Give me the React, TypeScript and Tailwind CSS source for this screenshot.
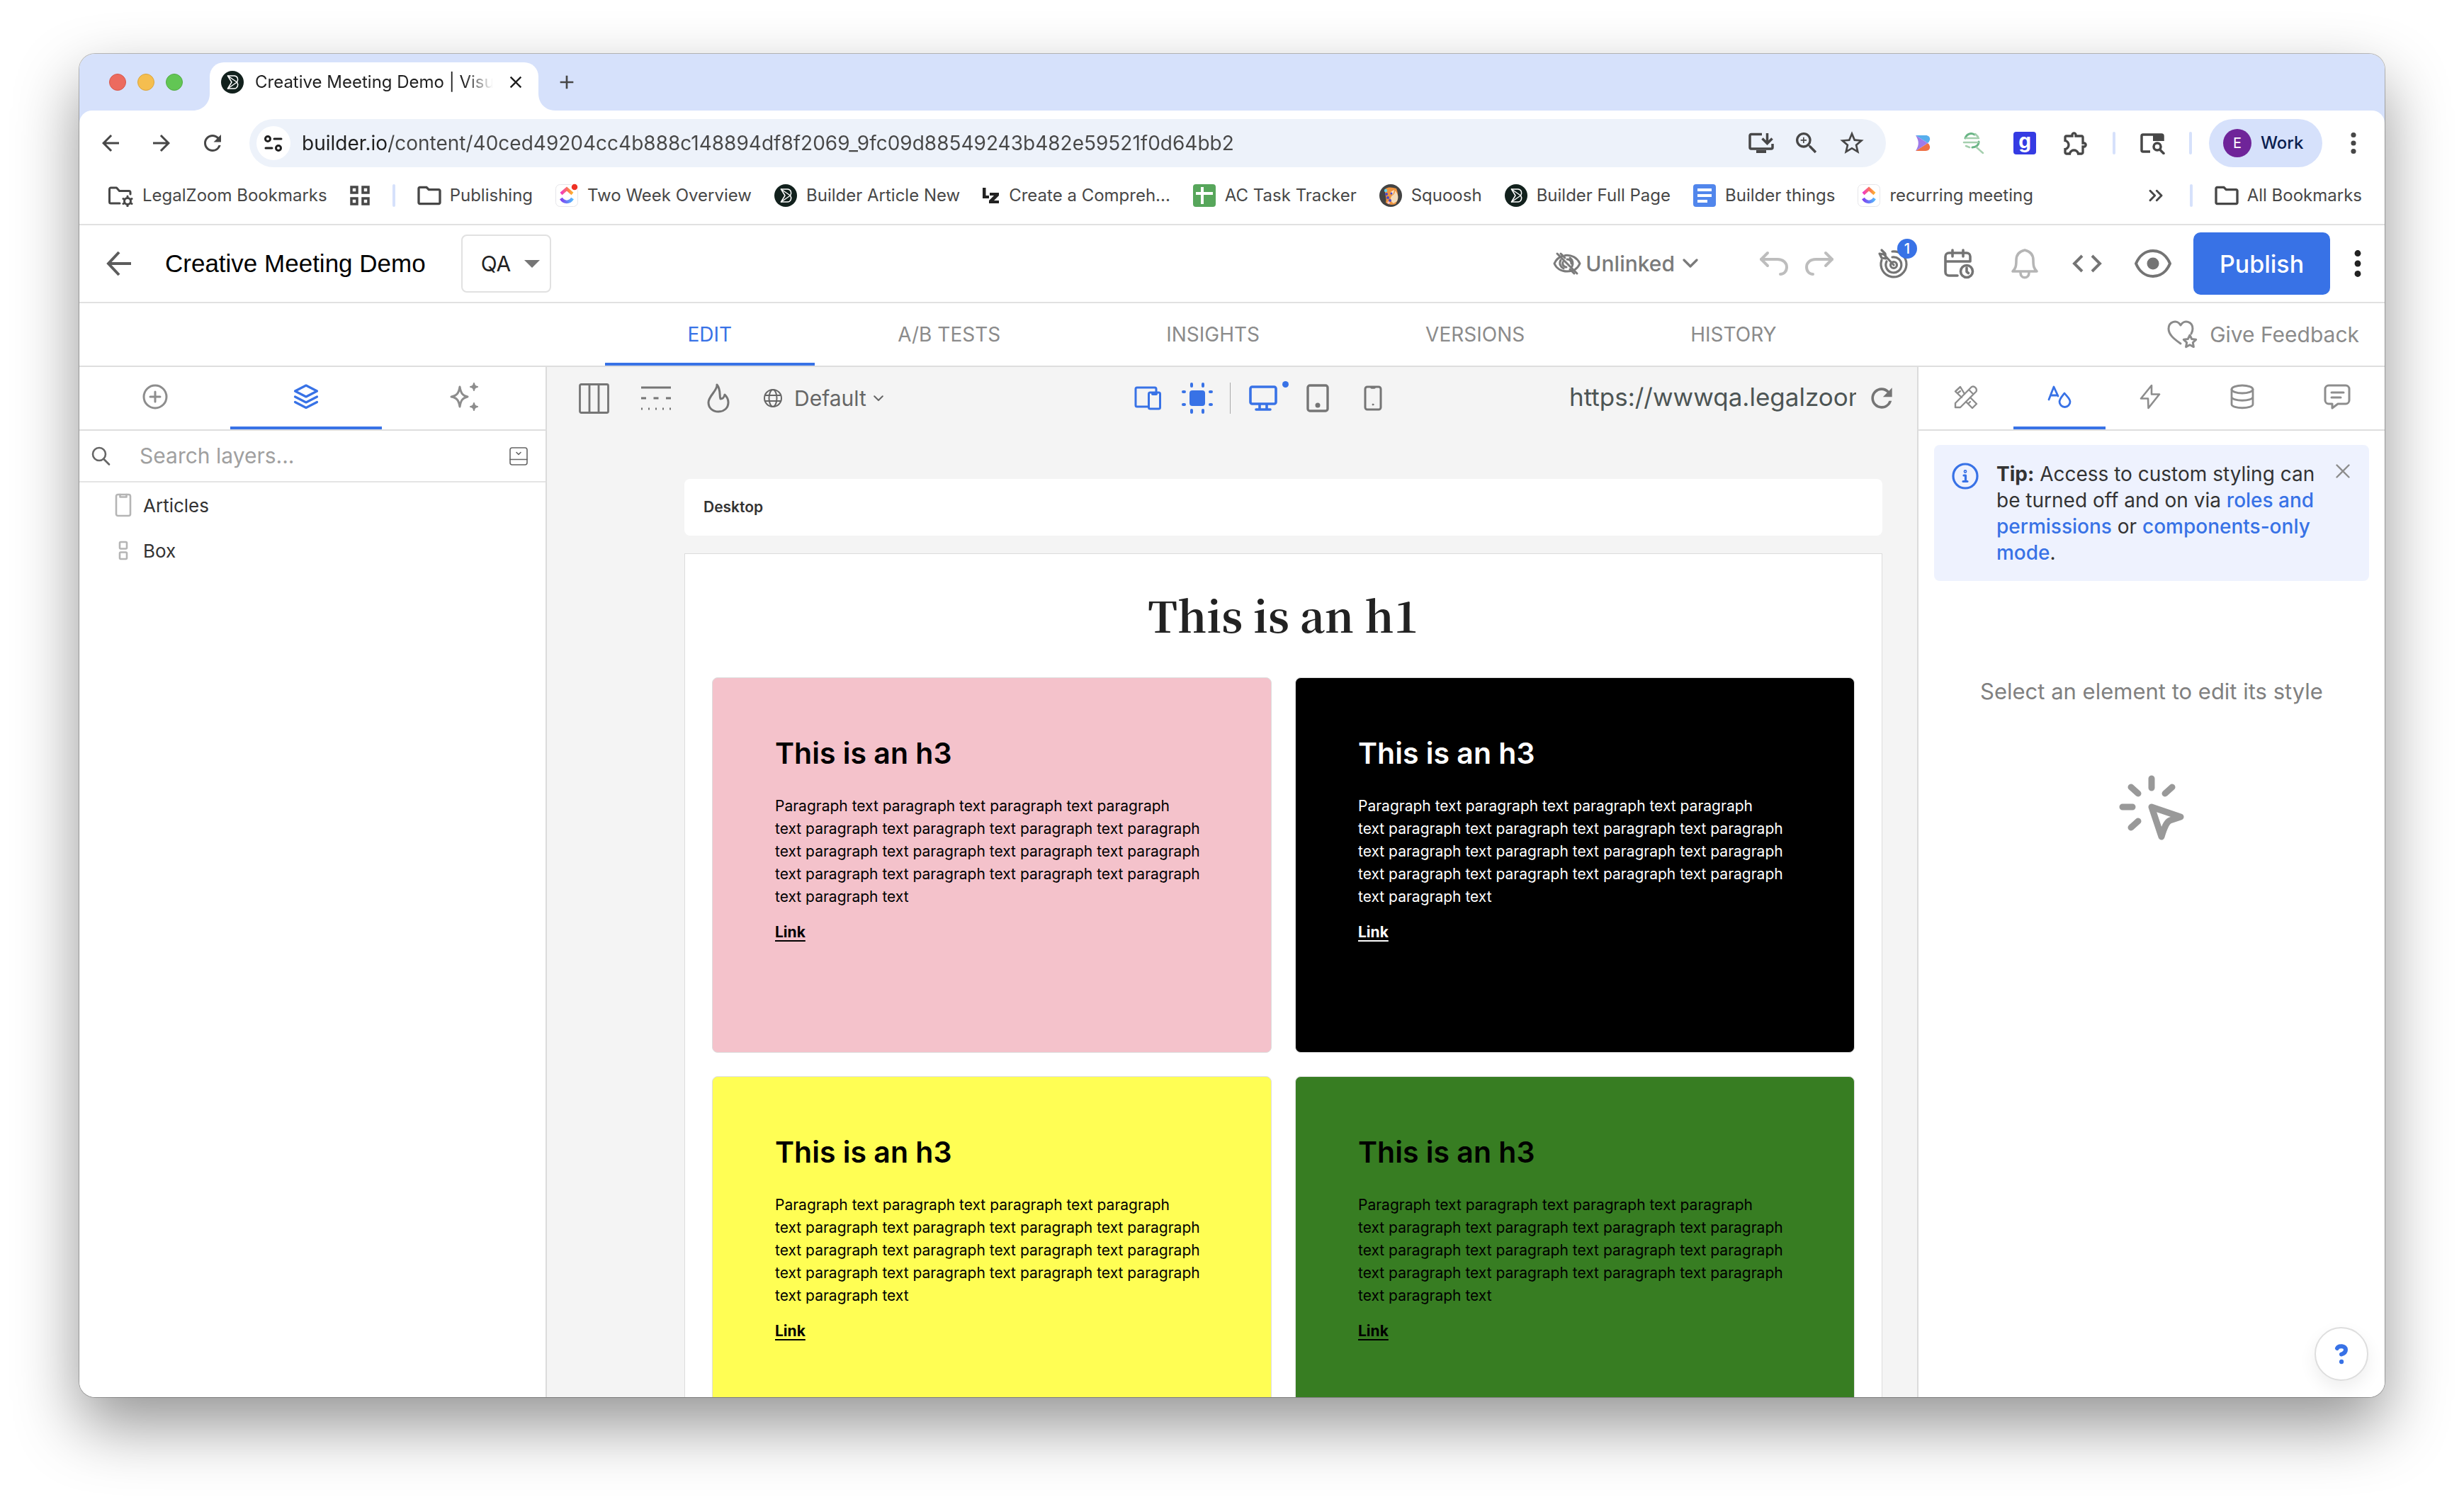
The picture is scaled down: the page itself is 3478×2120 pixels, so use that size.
import React from "react";
import type { ReactNode } from "react";
import {
  MdArrowBack,
  MdArrowForward,
  MdRefresh,
  MdOutlineFolder,
  MdZoomIn,
  MdStarOutline,
  MdOutlineExtension,
  MdClose,
  MdAdd,
} from "react-icons/md";
import { ChevronsRight } from "lucide-react";

type IconProps = { className?: string };

const Svg = ({
  box,
  className,
  width = 2,
  children,
}: {
  box: string;
  className?: string;
  width?: number;
  children: ReactNode;
}) => (
  <svg
    viewBox={box}
    className={className}
    fill="none"
    stroke="currentColor"
    strokeWidth={width}
    strokeLinecap="round"
    strokeLinejoin="round"
    aria-hidden="true"
  >
    {children}
  </svg>
);

const BuilderLogo = ({ className }: IconProps) => (
  <Svg box="0 0 32 32" className={className} width={1.5}>
    <circle cx="16" cy="16" r="16" fill="#12211d" stroke="none" />
    <g stroke="#fff">
      <path d="M9.500 7H18.500c5 0 6.500 5.500 4 9 2.500 3.500 1 9-4 9H9.500" fill="none" />
      <path d="M9.500 7l13 9-13 9 5.500-9z" />
    </g>
  </Svg>
);

const ClickUp = ({ dot = false, id }: { dot?: boolean; id: string }) => (
  <svg viewBox="0 0 32 32" className="size-8 shrink-0 overflow-visible" fill="none" aria-hidden="true">
    <defs>
      <linearGradient id={`${id}-a`} x1="6" x2="26" y1="0" y2="0" gradientUnits="userSpaceOnUse">
        <stop stopColor="#f02ae0" />
        <stop offset="0.6" stopColor="#fb7d4e" />
        <stop offset="1" stopColor="#fec42a" />
      </linearGradient>
      <linearGradient id={`${id}-b`} x1="6" x2="26" y1="0" y2="0" gradientUnits="userSpaceOnUse">
        <stop stopColor="#8432f0" />
        <stop offset="1" stopColor="#4fc4fd" />
      </linearGradient>
    </defs>
    <rect x="0.5" y="0.5" width="31" height="31" rx="6" fill="#fff" stroke="#e6e6ea" />
    <path d="M8 13.500l8-7 8 7" stroke={`url(#${id}-a)`} strokeWidth="4.500" />
    <path d="M8 20c4 6.500 12 6.500 16 0" stroke={`url(#${id}-b)`} strokeWidth="4.500" />
    {dot && <circle cx="27" cy="4" r="5" fill="#ee3124" stroke="#fff" strokeWidth="1.500" />}
  </svg>
);

const FolderGear = () => (
  <Svg box="0 0 36 32" className="h-8 w-9 shrink-0" width={3}>
    <path d="M17 27H4.500A2 2 0 0 1 2.500 25V7a2 2 0 0 1 2-2h8l4 4.500H30a2 2 0 0 1 2 2V14" />
    <circle cx="28" cy="24" r="4.500" />
    <path d="M28 17v1.500M28 29.500V31M22 20.500l1.500.8M32.500 26.700l1.500.8M22 27.500l1.500-.8M32.500 21.300l1.500-.8" />
  </Svg>
);

const Grid4 = () => (
  <Svg box="0 0 28 28" className="size-7" width={3.5}>
    <path strokeLinejoin="miter" d="M2 2h8v8H2zM18 2h8v8h-8zM2 18h8v8H2zM18 18h8v8h-8z" />
  </Svg>
);

const SheetIcon = () => (
  <svg viewBox="0 0 32 32" className="size-8 shrink-0" aria-hidden="true">
    <rect width="32" height="32" rx="4" fill="#57a65b" />
    <path d="M11 4h4v7h13v4H15v13h-4V15H4v-4h7z" fill="#fff" />
  </svg>
);

const DocIcon = () => (
  <svg viewBox="0 0 32 32" className="size-8 shrink-0" aria-hidden="true">
    <rect width="32" height="32" rx="4" fill="#5186ec" />
    <path d="M6 6h20v4H6zM6 14h20v4H6zM6 22h14v4H6z" fill="#fff" />
  </svg>
);

const LzIcon = () => (
  <svg viewBox="0 0 24 24" className="size-6 shrink-0" aria-hidden="true">
    <path d="M0 1h4.500v11H9v4H0z" fill="#222" />
    <path d="M10 8h13v4l-7 7h7v4H9v-4l7-7h-6z" fill="#222" />
  </svg>
);

const SquooshIcon = () => (
  <svg viewBox="0 0 32 32" className="size-8 shrink-0" aria-hidden="true">
    <circle cx="16" cy="16" r="16" fill="#434343" />
    <path d="M8 7c5-4 11-2 16-1 3 7 3 16-1 22-5 2-10 1-14-2 2-7-2-12-1-19z" fill="#ee9440" />
    <path d="M22 9c4 4 6 9 3 15l-5 3c-5-3-5-8-2-11 3-1 4-4 4-7z" fill="#f5dcb8" />
    <path d="M16 11l5-3-2 7z" fill="#fbe8cf" />
    <g fill="#4b49c9">
      <circle cx="10" cy="14" r="2" />
      <circle cx="12" cy="19" r="2" />
      <circle cx="15" cy="23" r="2" />
      <circle cx="17" cy="13" r="1.500" />
    </g>
    <circle cx="9" cy="9" r="2.200" fill="#62d3ee" />
    <circle cx="13" cy="26" r="1.800" fill="#f3c4ce" />
  </svg>
);

const InstallIcon = () => (
  <Svg box="0 0 40 32" className="h-8 w-10" width={3.5}>
    <path strokeLinecap="butt" d="M21 3.500H6a2 2 0 0 0-2 2V22a2 2 0 0 0 2 2h28a2 2 0 0 0 2-2v-5" />
    <path d="M13 26h14v4H13z" fill="currentColor" stroke="none" />
    <path strokeLinecap="butt" strokeLinejoin="miter" d="M28.500 2v13M21.500 9.500l7 7 7-7" />
  </Svg>
);

const TuneIcon = () => (
  <Svg box="0 0 28 28" className="size-7" width={3}>
    <circle cx="6" cy="8" r="3.500" />
    <path d="M15 8h10M3 21h9" />
    <circle cx="21" cy="21" r="3.500" />
  </Svg>
);

const RibbonLogo = () => (
  <svg viewBox="0 0 22 24" className="h-6 w-[22px]" aria-hidden="true">
    <path d="M1 1h14c7 0 8 7 3 11z" fill="#57aeed" />
    <path d="M1 23h14c7 0 8-7 3-11z" fill="#ef7045" />
    <path d="M1 1l17 11L1 23c5-8 5-14 0-22z" fill="#9f7be8" />
  </svg>
);

const SeoIcon = () => (
  <Svg box="0 0 32 32" className="size-8" width={3}>
    <g stroke="#69b585">
      <path d="M4 9C6 3 12 1 17 4" />
      <path d="M23 14c0 5-4 8-9 8" />
    </g>
    <g stroke="#a5cfae" strokeWidth="2.500">
      <path d="M5 9h18M2 15h20M20 22l9 8M18 3l4 4M5 20l5 2" />
    </g>
  </Svg>
);

const SearchPanelIcon = () => (
  <Svg box="0 0 36 32" className="h-8 w-9" width={3.5}>
    <path strokeLinecap="butt" d="M15 28H5a2 2 0 0 1-2-2V6a2 2 0 0 1 2-2h26a2 2 0 0 1 2 2v7" />
    <path d="M19 4h14v9H19z" fill="currentColor" stroke="none" />
    <circle cx="25" cy="21" r="5" />
    <path d="M29 25.500l5 5" />
  </Svg>
);

const UnlinkedIcon = () => (
  <Svg box="0 0 40 32" className="h-[34px] w-10" width={3}>
    <path d="M14 5C8 7 4 11 2 16c3 7 10 11 18 11 3 0 5-.4 7-1" />
    <path d="M17 4.500c9-1 17 3 21 11.500-1.500 3.500-4 6.500-7 8.500" />
    <path d="M11 11c-3 5 0 10 4 12M24 8c4 3 5 8 3 12" />
    <path d="M6 2l28 28M13 9l15 15M14 14c-1 3 1 7 5 7M20 10c4 0 6 3 6 6" />
    <path d="M11 2l6 6M24 24l6 6" />
  </Svg>
);

const UndoIcon = ({ className }: IconProps) => (
  <Svg box="0 0 42 36" className={className} width={4}>
    <path d="M12 3L3 12l9 9" />
    <path d="M3 12h23c8 0 13 5 13 11s-4 10-9 10" />
  </Svg>
);

const TargetIcon = () => (
  <Svg box="0 0 44 44" className="size-11" width={3.2}>
    <path d="M6 17a18 18 0 1 0 15-12" />
    <path d="M13 19a11 11 0 1 0 8-6" />
    <circle cx="23" cy="24" r="4.500" />
    <path d="M23 24L9 9M9 9L3 8l3 6 6 1-1-7-5-5" />
  </Svg>
);

const CalendarClock = () => (
  <Svg box="0 0 44 44" className="size-11" width={3.6}>
    <path d="M20 39H8a5 5 0 0 1-5-5V12a5 5 0 0 1 5-5h25a5 5 0 0 1 5 5v7H3M13 3v9M28 3v9" />
    <circle cx="33" cy="33" r="8.500" />
    <path d="M33 28v5.500l2.500 2" />
  </Svg>
);

const BellIcon = () => (
  <Svg box="0 0 44 44" className="size-11" width={3.6}>
    <path d="M5 33h34c-4-4-5-7-5-16 0-7-4-12-12-14-8 2-12 7-12 14 0 9-1 12-5 16z" />
    <path d="M16 35c0 9 12 9 12 0" />
  </Svg>
);

const CodeIcon = () => (
  <Svg box="0 0 44 28" className="h-7 w-11" width={4}>
    <path strokeLinecap="butt" strokeLinejoin="miter" d="M15 3L4 14l11 11M29 3l11 11-11 11" />
  </Svg>
);

const EyeIcon = () => (
  <Svg box="0 0 54 42" className="h-[42px] w-[54px]" width={4}>
    <path d="M3 21C8 9 17 3 27 3s19 6 24 18c-5 12-14 18-24 18S8 33 3 21z" />
    <circle cx="27" cy="21" r="8.500" fill="currentColor" stroke="none" />
  </Svg>
);

const HeartStar = () => (
  <Svg box="0 0 44 42" className="h-[42px] w-11" width={3}>
    <path d="M19 34C9 27 2 21 2 13 2 3 14-1 19 8c5-9 17-5 17 5 0 3-1 5-2 7" />
    <path d="M32 22l2.700 5.500 6 .8-4.400 4.200 1.100 6.100-5.400-2.900-5.400 2.900 1.100-6.100-4.400-4.200 6-.8z" />
  </Svg>
);

const PlusCircle = () => (
  <Svg box="0 0 36 36" className="size-9" width={3}>
    <circle cx="18" cy="18" r="16" />
    <path d="M18 11v14M11 18h14" />
  </Svg>
);

const LayersIcon = () => (
  <Svg box="0 0 36 36" className="size-9" width={3.2}>
    <path d="M18 2l15.500 8L18 18 2.500 10zM2.500 18L18 26l15.500-8M2.500 25.500l15.500 8 15.500-8" />
  </Svg>
);

const SparklesIcon = () => (
  <Svg box="0 0 42 40" className="h-10 w-[42px]" width={3}>
    <path d="M15 6c1.500 9 4 12.500 11 14-7 1.500-9.500 5-11 14-1.500-9-4-12.500-12-14 8-1.500 10.500-5 12-14z" />
    <path
      d="M35 1c.8 3.500 1.500 4.200 5 5-3.500.8-4.200 1.500-5 5-.8-3.500-1.500-4.200-5-5 3.500-.8 4.200-1.500 5-5zM35 29c.8 3.500 1.500 4.200 5 5-3.500.8-4.200 1.500-5 5-.8-3.500-1.500-4.200-5-5 3.500-.8 4.200-1.500 5-5z"
      fill="currentColor"
      strokeWidth="2"
    />
  </Svg>
);

const SearchIcon = () => (
  <Svg box="0 0 28 28" className="size-7 shrink-0" width={2.6}>
    <circle cx="12" cy="11" r="9" />
    <path d="M18.500 18l7.500 7.500" />
  </Svg>
);

const CollapseIcon = () => (
  <Svg box="0 0 26 26" className="size-[26px]" width={1.6}>
    <rect x="1" y="1" width="24" height="24" rx="3" />
    <path d="M1 17.500h24M10 7.500l3 3 3-3" />
  </Svg>
);

const PageIcon = () => (
  <Svg box="0 0 24 34" className="h-[34px] w-6" width={2.6}>
    <rect x="2" y="2" width="20" height="30" rx="2.500" />
    <path d="M7.500 2v3.500h9V2" />
  </Svg>
);

const StackIcon = () => (
  <Svg box="0 0 14 28" className="h-7 w-6" width={2.6}>
    <rect x="2" y="2" width="10" height="9.500" rx="1.500" />
    <rect x="2" y="16.500" width="10" height="9.500" rx="1.500" />
  </Svg>
);

const ColumnsIcon = () => (
  <Svg box="0 0 43 43" className="size-[43px]" width={2.8}>
    <rect x="1.500" y="1.500" width="40" height="40" rx="2" />
    <path d="M15 2v39M28 2v39" />
  </Svg>
);

const LinesIcon = () => (
  <Svg box="0 0 42 34" className="h-[34px] w-[42px]" width={2.8}>
    <path strokeLinecap="butt" d="M0 2h42" />
    <path strokeLinecap="butt" d="M0 17h42" strokeDasharray="7 10.500" />
    <path strokeLinecap="butt" d="M0 32h42" strokeDasharray="2 8" />
  </Svg>
);

const FlameIcon = () => (
  <Svg box="0 0 32 42" className="h-[42px] w-8" width={3}>
    <path d="M14 2c1 8-12 16-12 25 0 8 6 13 14 13s14-5 14-13c0-5-2-8-5-11-1 4-3 6-6 6-2-4 1-13-5-20z" />
  </Svg>
);

const GlobeIcon = () => (
  <Svg box="0 0 26 26" className="size-[26px]" width={2}>
    <circle cx="13" cy="13" r="12" />
    <ellipse cx="13" cy="13" rx="5.500" ry="12" />
    <path d="M2 9h22M2 17h22" />
  </Svg>
);

const Chevron = ({ className }: IconProps) => (
  <Svg box="0 0 24 14" className={className} width={3.2}>
    <path d="M3 2l9 9 9-9" />
  </Svg>
);

const DevicesIcon = () => (
  <Svg box="0 0 38 34" className="h-[34px] w-[38px]" width={3}>
    <path d="M19 29H4a2 2 0 0 1-2-2V4a2 2 0 0 1 2-2h25a2 2 0 0 1 2 2v5" />
    <rect x="20.500" y="9" width="16" height="23" rx="2" />
    <path d="M26 11h5" strokeWidth="4" />
  </Svg>
);

const SelectAreaIcon = () => (
  <Svg box="0 0 44 44" className="size-11" width={4}>
    <rect x="11" y="11" width="22" height="22" rx="4" fill="currentColor" stroke="none" />
    <path d="M14 2v3M30 2v3M14 39v3M30 39v3M2 13h2M40 13h2M2 31h2M40 31h2" />
  </Svg>
);

const MonitorIcon = () => (
  <Svg box="0 0 40 36" className="h-9 w-10" width={3.6}>
    <rect x="2" y="2" width="36" height="24" rx="2.500" />
    <path d="M15 27v6M25 27v6M10 34h20" />
  </Svg>
);

const TabletIcon = () => (
  <Svg box="0 0 32 40" className="h-10 w-8" width={3.4}>
    <rect x="2" y="2" width="28" height="36" rx="3" />
    <circle cx="16" cy="30" r="2.500" fill="currentColor" strokeWidth="2" />
  </Svg>
);

const PhoneIcon = () => (
  <Svg box="0 0 26 36" className="h-9 w-[26px]" width={3}>
    <rect x="2" y="2" width="22" height="32" rx="3" />
    <path d="M11 3h4" strokeWidth="3.500" />
    <circle cx="13" cy="27" r="1" fill="currentColor" strokeWidth="1" />
  </Svg>
);

const RulerPencil = () => (
  <Svg box="0 0 34 34" className="size-[34px]" width={2.4}>
    <path d="M2 32v-6L25 3a5 5 0 0 1 6.500 6.500L9 32zM21 7l6.500 6.500" />
    <path d="M15 13L9 3 2 9.500l9 8.500M5 12l4-3" />
    <path d="M23 18l9 9-6 6-9-9M20 27l3-3" />
  </Svg>
);

const StyleIcon = () => (
  <Svg box="0 0 34 32" className="h-8 w-[34px]" width={2.8}>
    <path d="M2 20L9 2l6 13M5 14h9" />
    <path d="M24 11c-4 5-7 8-7 12a7.500 7.500 0 0 0 15 0c0-4-4-7-8-12z" />
  </Svg>
);

const BoltIcon = () => (
  <Svg box="0 0 30 36" className="h-9 w-[30px]" width={2.6}>
    <path d="M17 2L2 20.500h10L12.500 34 28 14.500H17z" />
  </Svg>
);

const DatabaseIcon = () => (
  <Svg box="0 0 34 36" className="h-9 w-[34px]" width={2.8}>
    <ellipse cx="17" cy="7.500" rx="15" ry="5.500" />
    <path d="M2 7.500v21c0 7 30 7 30 0v-21M2 18c0 7 30 7 30 0" />
  </Svg>
);

const ChatIcon = () => (
  <Svg box="0 0 38 36" className="h-9 w-[38px]" width={3}>
    <path d="M7 2h24a5 5 0 0 1 5 5v16a5 5 0 0 1-5 5H20l-8 6v-6H7a5 5 0 0 1-5-5V7a5 5 0 0 1 5-5zM11 12h17M11 19h13" />
  </Svg>
);

const InfoIcon = () => (
  <Svg box="0 0 38 38" className="size-[38px] shrink-0" width={3.2}>
    <circle cx="19" cy="19" r="17" />
    <path d="M17 18h2.500v8M16 26.500h6" />
    <circle cx="19" cy="12.500" r="0.800" />
  </Svg>
);

const ClickIcon = () => (
  <Svg box="0 0 92 92" className="size-[92px]" width={9}>
    <path d="M46 5v13M5 45h14M17 17l10 9M75 17l-10 9M17 74l10-9" />
    <path d="M46 45l41 14-15 5c-4 2-7 6-12 23z" />
  </Svg>
);

const IconButton = ({
  label,
  className = "",
  children,
}: {
  label: string;
  className?: string;
  children: ReactNode;
}) => (
  <button aria-label={label} className={`flex shrink-0 items-center justify-center ${className}`}>
    {children}
  </button>
);

const Kebab = ({ className }: IconProps) => (
  <svg viewBox="0 0 12 36" className={className} fill="currentColor" aria-hidden="true">
    <circle cx="6" cy="5" r="4" />
    <circle cx="6" cy="18" r="4" />
    <circle cx="6" cy="31" r="4" />
  </svg>
);

const Bookmark = ({ icon, children }: { icon: ReactNode; children: ReactNode }) => (
  <a href="#" className="flex shrink-0 items-center gap-[13px] whitespace-nowrap">
    {icon}
    <span>{children}</span>
  </a>
);

const Divider = () => <span className="h-8 w-1 shrink-0 rounded-full bg-[#d6e1fb]" />;

function TabStrip() {
  return (
    <div className="flex h-20 shrink-0 items-end bg-[#d6e1fb]">
      <div className="ml-[42px] flex items-center gap-4 self-center">
        <span className="size-6 rounded-full border border-[#d8584c] bg-[#ec6b5f]" />
        <span className="size-6 rounded-full border border-[#dba53b] bg-[#f5be4f]" />
        <span className="size-6 rounded-full border border-[#52ab43] bg-[#62c654]" />
      </div>
      <div className="relative ml-[38px] flex h-[68px] w-[464px] items-center rounded-t-[20px] bg-white pb-3 pl-4">
        <svg viewBox="0 0 24 24" className="absolute bottom-0 -left-6 size-6" aria-hidden="true">
          <path d="M24 0v24H0C14 24 24 14 24 0z" fill="#fff" />
        </svg>
        <svg viewBox="0 0 24 24" className="absolute -right-6 bottom-0 size-6" aria-hidden="true">
          <path d="M0 0v24h24C10 24 0 14 0 0z" fill="#fff" />
        </svg>
        <BuilderLogo className="size-8 shrink-0" />
        <span className="ml-4 w-[336px] overflow-hidden text-2xl whitespace-nowrap text-[#1f1f1f] [mask-image:linear-gradient(90deg,#000_88%,transparent)]">
          Creative Meeting Demo | Visu
        </span>
        <IconButton label="Close tab" className="ml-[18px] text-[#1f1f1f]">
          <MdClose className="size-7" />
        </IconButton>
      </div>
      <IconButton label="New tab" className="ml-6 h-[80px] text-[#474747]">
        <MdAdd className="size-8" />
      </IconButton>
    </div>
  );
}

function Toolbar() {
  return (
    <div className="bg-[#d6e1fb]">
      <div className="flex items-center gap-8 rounded-t-[18px] bg-white px-6 pt-3 text-[#474747]">
        <IconButton label="Back" className="size-10">
          <MdArrowBack className="size-9" />
        </IconButton>
        <IconButton label="Forward" className="size-10">
          <MdArrowForward className="size-9" />
        </IconButton>
        <IconButton label="Reload" className="size-10">
          <MdRefresh className="size-9" />
        </IconButton>
        <div className="flex h-[68px] flex-1 items-center rounded-full bg-[#edf2fa] pr-7 pl-[10px]">
          <IconButton label="Site information" className="size-12 rounded-full bg-white text-[#1f1f1f]">
            <TuneIcon />
          </IconButton>
          <input
            aria-label="Address"
            readOnly
            value="builder.io/content/40ced49204cc4b888c148894df8f2069_9fc09d88549243b482e59521f0d64bb2"
            className="ml-4 flex-1 bg-[linear-gradient(90deg,#1f1f1f_124px,#474747_124px)] bg-clip-text text-[28px] text-transparent outline-none"
          />
          <div className="flex gap-6">
            <IconButton label="Install app" className="size-10">
              <InstallIcon />
            </IconButton>
            <IconButton label="Zoom" className="size-10">
              <MdZoomIn className="size-10" />
            </IconButton>
            <IconButton label="Bookmark this page" className="size-10">
              <MdStarOutline className="size-10" />
            </IconButton>
          </div>
        </div>
        <IconButton label="Ribbon extension" className="size-10">
          <RibbonLogo />
        </IconButton>
        <IconButton label="SEO extension" className="size-10">
          <SeoIcon />
        </IconButton>
        <IconButton label="g extension" className="size-10">
          <span className="size-8 rounded-sm bg-[#353be3] text-center text-[28px] leading-[26px] font-bold text-white">
            g
          </span>
        </IconButton>
        <IconButton label="Extensions" className="size-10">
          <MdOutlineExtension className="size-10" />
        </IconButton>
        <Divider />
        <IconButton label="Search side panel" className="size-10">
          <SearchPanelIcon />
        </IconButton>
        <Divider />
        <div className="-ml-2 flex items-center gap-6">
          <button className="flex h-[68px] w-40 items-center gap-[13px] rounded-full bg-[#d6e1fb] pl-5 text-2xl font-medium text-[#0a1d4e]">
            <span className="flex size-10 items-center justify-center rounded-full bg-[#6f2499] text-xl font-normal text-white">
              E
            </span>
            Work
          </button>
          <IconButton label="Browser menu" className="size-10">
            <Kebab className="h-8 w-3" />
          </IconButton>
        </div>
      </div>
    </div>
  );
}

function Bookmarks() {
  const folder = <MdOutlineFolder className="-mx-1 size-10 shrink-0" />;
  return (
    <nav
      aria-label="Bookmarks"
      className="flex h-[82px] shrink-0 items-center gap-8 border-b-2 border-[#e1e1e1] bg-white pr-8 pl-10 text-2xl text-[#474747]"
    >
      <Bookmark icon={<FolderGear />}>LegalZoom Bookmarks</Bookmark>
      <IconButton label="Tab groups">
        <Grid4 />
      </IconButton>
      <Divider />
      <Bookmark icon={folder}>Publishing</Bookmark>
      <Bookmark icon={<ClickUp id="cu1" dot />}>Two Week Overview</Bookmark>
      <Bookmark icon={<BuilderLogo className="size-8 shrink-0" />}>Builder Article New</Bookmark>
      <Bookmark icon={<LzIcon />}>Create a Compreh...</Bookmark>
      <Bookmark icon={<SheetIcon />}>AC Task Tracker</Bookmark>
      <Bookmark icon={<SquooshIcon />}>Squoosh</Bookmark>
      <Bookmark icon={<BuilderLogo className="size-8 shrink-0" />}>Builder Full Page</Bookmark>
      <Bookmark icon={<DocIcon />}>Builder things</Bookmark>
      <Bookmark icon={<ClickUp id="cu2" />}>recurring meeting</Bookmark>
      <IconButton label="More bookmarks" className="ml-auto">
        <ChevronsRight className="size-8" strokeWidth={2.2} />
      </IconButton>
      <Divider />
      <Bookmark icon={folder}>All Bookmarks</Bookmark>
    </nav>
  );
}

function AppHeader() {
  return (
    <header className="flex h-[110px] shrink-0 items-center border-b-2 border-[#e1e1e1] bg-white pr-7 pl-9 text-[#747474]">
      <IconButton label="Back to content" className="text-[#5c5c5c]">
        <Svg box="0 0 40 36" className="h-9 w-10" width={4}>
          <path strokeLinecap="butt" strokeLinejoin="miter" d="M20 2L5 18l15 16M4 18h33" />
        </Svg>
      </IconButton>
      <h1 className="ml-[45px] font-['Liberation_Sans',sans-serif] text-[35px] text-black">Creative Meeting Demo</h1>
      <div className="relative ml-[50px] shrink-0">
        <select
          aria-label="Environment"
          className="h-[82px] w-[127px] appearance-none rounded-lg border-2 border-[#e1e1e1] bg-white pl-[26px] text-[30px] text-[#222]"
        >
          <option>QA</option>
        </select>
        <svg
          viewBox="0 0 22 11"
          className="pointer-events-none absolute top-9 right-4 h-[11px] w-[22px]"
          aria-hidden="true"
        >
          <path d="M0 0h22L11 11z" fill="#757575" />
        </svg>
      </div>
      <button className="ml-auto flex items-center gap-[6px] text-[30px] font-medium text-[#7a7a7a]">
        <UnlinkedIcon />
        Unlinked
        <Chevron className="ml-1 h-[14px] w-6" />
      </button>
      <div className="ml-[84px] flex gap-5 text-[#bdbdbd]">
        <IconButton label="Undo" className="size-11">
          <UndoIcon className="h-9 w-[42px]" />
        </IconButton>
        <IconButton label="Redo" className="size-11">
          <UndoIcon className="h-9 w-[42px] -scale-x-100" />
        </IconButton>
      </div>
      <div className="ml-[60px] flex items-center gap-[49px]">
        <div className="relative flex">
          <IconButton label="Targeting">
            <TargetIcon />
          </IconButton>
          <span className="absolute -top-[13px] -right-3 flex size-7 items-center justify-center rounded-full bg-[#3872e6] text-[20px] font-medium text-white">
            1
          </span>
        </div>
        <IconButton label="Schedule">
          <CalendarClock />
        </IconButton>
        <IconButton label="Notifications" className="text-[#b5b5b5]">
          <BellIcon />
        </IconButton>
      </div>
      <div className="ml-11 flex items-center gap-11">
        <IconButton label="Code">
          <CodeIcon />
        </IconButton>
        <IconButton label="Preview">
          <EyeIcon />
        </IconButton>
      </div>
      <button className="ml-[30px] h-[88px] w-[193px] rounded-[10px] bg-[#3872e6] text-[34px] font-medium text-white">
        Publish
      </button>
      <IconButton label="More" className="ml-[29px] w-5 text-[#222]">
        <Kebab className="h-10 w-[14px]" />
      </IconButton>
    </header>
  );
}

const TABS = ["EDIT", "A/B TESTS", "INSIGHTS", "VERSIONS", "HISTORY"];

function MainTabs() {
  return (
    <div className="relative flex h-[90px] shrink-0 justify-center border-b-2 border-[#dedede] bg-white text-[28px] text-[#8b8b8b]">
      {TABS.map((t, i) => (
        <button
          key={t}
          className={
            i === 0 ? "border-b-4 border-[#3872e6] px-[117px] pt-1 text-[#3872e6]" : "border-b-4 border-transparent px-[117px] pt-1"
          }
        >
          {t}
        </button>
      ))}
      <button className="absolute inset-y-0 right-9 flex items-center gap-4 text-[30px] text-[#8b8b8b]">
        <HeartStar />
        Give Feedback
      </button>
    </div>
  );
}

function LayersPanel() {
  return (
    <aside className="flex w-[660px] shrink-0 flex-col border-r-2 border-[#dcdcdc] bg-white">
      <div className="flex h-[90px] border-b-2 border-[#dedede] text-[#8d8d8d]">
        <IconButton label="Insert" className="w-[213px] pb-1">
          <PlusCircle />
        </IconButton>
        <IconButton label="Layers" className="w-[214px] border-b-4 border-[#3872e6] text-[#3872e6]">
          <LayersIcon />
        </IconButton>
        <IconButton label="Generate" className="flex-1 pb-1">
          <SparklesIcon />
        </IconButton>
      </div>
      <label className="flex h-[73px] items-center border-b-2 border-[#e4e4e4] pr-[25px] pl-4 text-[#666]">
        <SearchIcon />
        <input
          aria-label="Search layers"
          placeholder="Search layers..."
          className="ml-[41px] min-w-0 flex-1 text-[30px] outline-none placeholder:text-[#a0a0a0]"
        />
        <IconButton label="Collapse all">
          <CollapseIcon />
        </IconButton>
      </label>
      <ul className="text-[26px] text-[#333]">
        <li className="flex h-16 items-center gap-4 pl-[50px]">
          <span className="text-[#b5b5b5]">
            <PageIcon />
          </span>
          Articles
        </li>
        <li className="flex h-16 items-center gap-4 pl-[50px]">
          <span className="text-[#b5b5b5]">
            <StackIcon />
          </span>
          Box
        </li>
      </ul>
    </aside>
  );
}

function CanvasToolbar() {
  return (
    <div className="flex h-[88px] shrink-0 items-center pr-7 pl-[45px] text-[#757575]">
      <div className="flex items-center">
        <IconButton label="Columns">
          <ColumnsIcon />
        </IconButton>
        <IconButton label="Outlines" className="ml-[45px]">
          <LinesIcon />
        </IconButton>
        <IconButton label="Heatmap" className="ml-[51px]">
          <FlameIcon />
        </IconButton>
        <button className="ml-[48px] flex items-center text-[30px] text-[#666]">
          <GlobeIcon />
          <span className="ml-[17px]">Default</span>
          <Chevron className="ml-[9px] h-[9px] w-4" />
        </button>
      </div>
      <span className="flex-[4]" />
      <div className="flex items-center text-[#3872e6]">
        <IconButton label="Responsive">
          <DevicesIcon />
        </IconButton>
        <IconButton label="Focus" className="ml-[29px]">
          <SelectAreaIcon />
        </IconButton>
        <span className="ml-6 h-11 w-px bg-[#a9a9a9]" />
        <div className="relative ml-[26px] flex">
          <IconButton label="Desktop">
            <MonitorIcon />
          </IconButton>
          <span className="absolute -top-[6px] -right-4 size-[9px] rounded-full bg-[#3872e6]" />
        </div>
        <IconButton label="Tablet" className="ml-[41px] text-[#757575]">
          <TabletIcon />
        </IconButton>
        <IconButton label="Phone" className="ml-[49px] text-[#757575]">
          <PhoneIcon />
        </IconButton>
      </div>
      <span className="flex-[3]" />
      <input
        aria-label="Preview URL"
        readOnly
        value="https://wwwqa.legalzoom.com"
        className="w-[405px] pb-[3px] text-[35px] text-[#4d5554] outline-none"
      />
      <IconButton label="Reload preview" className="ml-[14px]">
        <MdRefresh className="size-11" />
      </IconButton>
    </div>
  );
}

const LINES = [
  "Paragraph text paragraph text paragraph text paragraph",
  "text paragraph text paragraph text paragraph text paragraph",
  "text paragraph text paragraph text paragraph text paragraph",
  "text paragraph text paragraph text paragraph text paragraph",
  "text paragraph text",
];

const CARDS = [
  "bg-[#f4c2cb] text-black",
  "bg-black text-white",
  "bg-[#fffe54] text-black",
  "bg-[#377d22] text-black",
];

function Canvas() {
  return (
    <main className="flex min-w-0 flex-1 flex-col overflow-hidden bg-[#f4f4f4]">
      <CanvasToolbar />
      <div className="mt-[70px] flex min-h-0 flex-1 flex-col pr-[49px] pl-[194px]">
        <div className="flex h-20 shrink-0 items-center rounded-lg bg-white pl-[27px] text-[21px] font-semibold text-[#333]">
          Desktop
        </div>
        <div className="mt-[25px] shrink-0 border border-[#dcdcdc] bg-white px-[38px]">
          <h2 className="flex h-[174px] items-center justify-center pb-1 font-['Noto_Serif_CJK_SC','Liberation_Serif',serif] text-[60px] font-bold text-[#222]">
            This is an h1
          </h2>
          <div className="grid grid-cols-2 gap-[33px] pb-10">
            {CARDS.map((color) => (
              <article
                key={color}
                className={`min-h-[530px] rounded-lg border border-[#dedede] px-[88px] pt-[82px] ${color}`}
              >
                <h3 className="text-[41px] leading-[48px] font-semibold">This is an h3</h3>
                <p className="mt-[35px] text-[21px] leading-8 whitespace-nowrap">
                  {LINES.map((line, i) => (
                    <span key={i} className="block">
                      {line}
                    </span>
                  ))}
                </p>
                <a
                  href="#"
                  className="mt-[18px] inline-block text-[21px] leading-8 font-bold underline decoration-2 underline-offset-4"
                >
                  Link
                </a>
              </article>
            ))}
          </div>
        </div>
      </div>
    </main>
  );
}

function StylePanel() {
  const tabs = [
    { label: "Options", icon: <RulerPencil /> },
    { label: "Style", icon: <StyleIcon /> },
    { label: "Animate", icon: <BoltIcon /> },
    { label: "Data", icon: <DatabaseIcon /> },
    { label: "Comments", icon: <ChatIcon /> },
  ];
  return (
    <aside className="relative w-[660px] shrink-0 border-l-2 border-[#dcdcdc] bg-white">
      <div className="flex h-[90px] border-b-2 border-[#dedede] text-[#8d8d8d]">
        {tabs.map(({ label, icon }) => (
          <IconButton
            key={label}
            label={label}
            className={
              label === "Style"
                ? "w-[130px] border-b-4 border-[#3872e6] text-[#3872e6]"
                : label === "Animate"
                  ? "w-[126px] border-b-4 border-transparent"
                  : "flex-1 border-b-4 border-transparent"
            }
          >
            {icon}
          </IconButton>
        ))}
      </div>
      <div className="mx-[22px] mt-5 flex items-start rounded-lg bg-[#eef2fe] pt-[23px] pr-[27px] pb-[21px] pl-[25px]">
        <span className="mt-[2px] text-[#3872e6]">
          <InfoIcon />
        </span>
        <p className="ml-[25px] flex-1 text-[28px] leading-[37px] text-[#333]">
          <b>Tip:</b> Access to custom styling can be turned off and on via{" "}
          <a href="#" className="font-medium text-[#3872e6]">
            roles and permissions
          </a>{" "}
          or{" "}
          <a href="#" className="font-medium text-[#3872e6]">
            components-only mode
          </a>
          .
        </p>
        <IconButton label="Dismiss tip" className="mt-1 text-[#8d8d8d]">
          <Svg box="0 0 20 20" className="size-5" width={2.4}>
            <path d="M1.500 1.500l17 17M18.500 1.500l-17 17" />
          </Svg>
        </IconButton>
      </div>
      <p className="mt-[134px] text-center text-[31px] leading-[44px] text-[#808080]">
        Select an element to edit its style
      </p>
      <div className="mt-24 flex justify-center text-[#999]">
        <ClickIcon />
      </div>
      <IconButton
        label="Help"
        className="absolute right-[23px] bottom-[23px] size-[76px] rounded-full border-2 border-[#dedede] bg-white text-[#3872e6] shadow-[0_10px_24px_rgba(0,0,0,0.07)]"
      >
        <Svg box="0 0 20 32" className="h-8 w-5" width={6}>
          <path d="M4 8c2-4 12-4 12 2 0 4-3 5.500-6 6.500" />
          <circle cx="10" cy="27" r="3.200" fill="currentColor" stroke="none" />
        </Svg>
      </IconButton>
    </aside>
  );
}

export default function App() {
  return (
    <div className="flex h-screen bg-white px-28 pt-[76px] pb-[148px] font-['Inter','Liberation_Sans',sans-serif]">
      <div className="flex min-w-0 flex-1 flex-col overflow-hidden rounded-[22px] bg-white shadow-[0_0_0_1px_rgba(0,0,0,0.25),0_40px_90px_rgba(0,0,0,0.42)]">
        <TabStrip />
        <Toolbar />
        <Bookmarks />
        <AppHeader />
        <MainTabs />
        <div className="flex min-h-0 flex-1">
          <LayersPanel />
          <Canvas />
          <StylePanel />
        </div>
      </div>
    </div>
  );
}
